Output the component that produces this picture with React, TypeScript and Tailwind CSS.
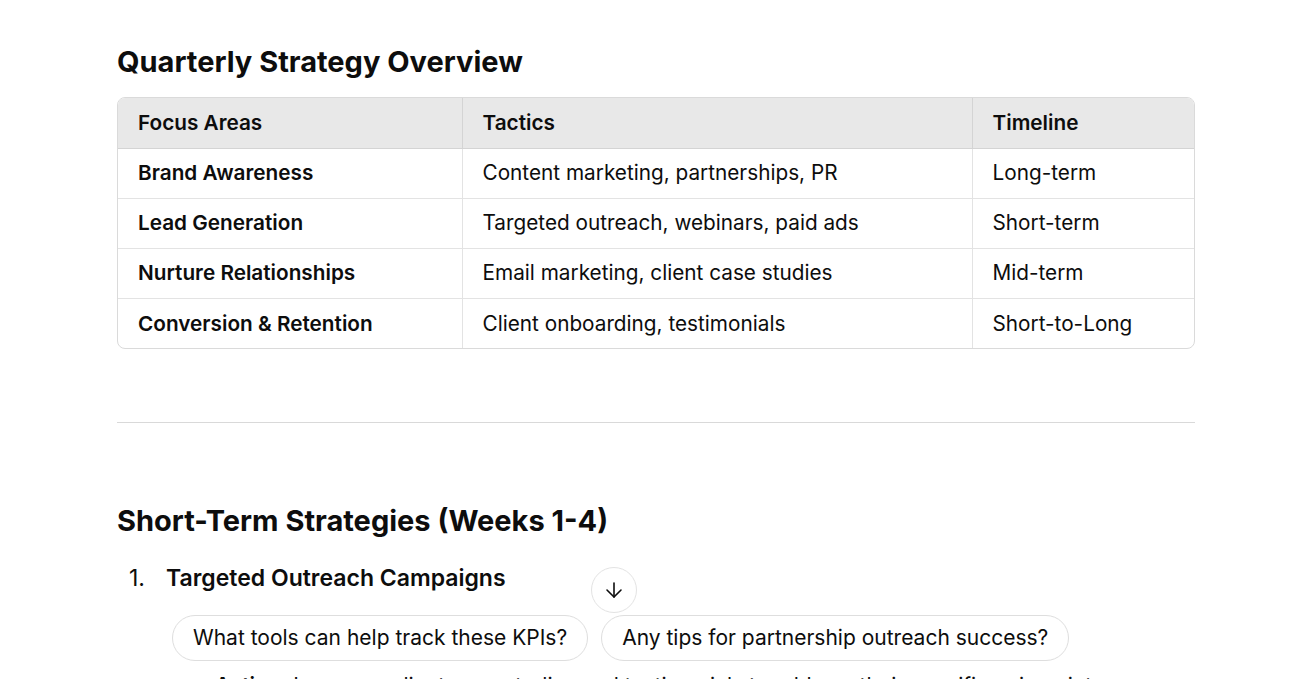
import { ArrowDown } from "lucide-react";

type Row = {
  focus: string;
  tactics: string;
  timeline: string;
};

const ROWS: Row[] = [
  { focus: "Brand Awareness", tactics: "Content marketing, partnerships, PR", timeline: "Long-term" },
  { focus: "Lead Generation", tactics: "Targeted outreach, webinars, paid ads", timeline: "Short-term" },
  { focus: "Nurture Relationships", tactics: "Email marketing, client case studies", timeline: "Mid-term" },
  { focus: "Conversion & Retention", tactics: "Client onboarding, testimonials", timeline: "Short-to-Long" },
];

const SUGGESTIONS = [
  "What tools can help track these KPIs?",
  "Any tips for partnership outreach success?",
];

export default function App() {
  return (
    <main className="relative h-[679px] overflow-hidden bg-white font-['Inter','Liberation_Sans',sans-serif] text-[#0d0d0d]">
      <div className="ml-[117px] w-[1078px] pt-[45px]">
        <h2 className="text-[29px] font-bold leading-[34px]">Quarterly Strategy Overview</h2>

        <div className="mt-[18px] overflow-hidden rounded-lg border border-[#dadada]">
          <table className="w-full border-collapse text-left text-[20.75px]">
            <thead>
              <tr className="bg-[#e8e8e8]">
                <th className="h-[50px] w-[344px] border-b border-[#d4d4d4] px-5 font-semibold">Focus Areas</th>
                <th className="h-[50px] w-[510px] border-b border-l border-[#d4d4d4] px-5 font-semibold">Tactics</th>
                <th className="h-[50px] border-b border-l border-[#d4d4d4] px-5 font-semibold">Timeline</th>
              </tr>
            </thead>
            <tbody>
              {ROWS.map((row, i) => (
                <tr key={row.focus} className={i < ROWS.length - 1 ? "border-b border-[#e3e3e3]" : ""}>
                  <td className="h-[50px] px-5 font-semibold">{row.focus}</td>
                  <td className="h-[50px] border-l border-[#e3e3e3] px-5">{row.tactics}</td>
                  <td className="h-[50px] border-l border-[#e3e3e3] px-5">{row.timeline}</td>
                </tr>
              ))}
            </tbody>
          </table>
        </div>

        <hr className="mt-[73px] border-t border-[#d9d9d9]" />

        <h2 className="mt-[81px] text-[29px] font-bold leading-[34px]">
          Short-Term Strategies (Weeks 1-4)
        </h2>

        <ol className="mt-[26px] list-none">
          <li className="flex text-[23px] leading-[28px]">
            <span className="w-[49px] pl-[12px]">1.</span>
            <span className="font-semibold">Targeted Outreach Campaigns</span>
          </li>
        </ol>

        <div className="mt-[23px] flex gap-[13px] pl-[55px]">
          {SUGGESTIONS.map((s) => (
            <button
              key={s}
              className="h-[46px] rounded-full border border-[#dedede] bg-white px-5 text-[21px] text-[#0d0d0d]"
            >
              {s}
            </button>
          ))}
        </div>

        <p className="mt-[11px] whitespace-nowrap pl-[98px] text-[21px] leading-[28px]">
          <span className="font-semibold">Action:</span> Leverage client case studies and testimonials to address their specific pain points.
        </p>
      </div>

      <button className="absolute left-[591px] top-[567px] flex h-[46px] w-[46px] items-center justify-center rounded-full border border-[#e3e3e3] bg-white">
        <ArrowDown className="h-6 w-6 text-[#0d0d0d]" strokeWidth={1.6} />
      </button>
    </main>
  );
}
